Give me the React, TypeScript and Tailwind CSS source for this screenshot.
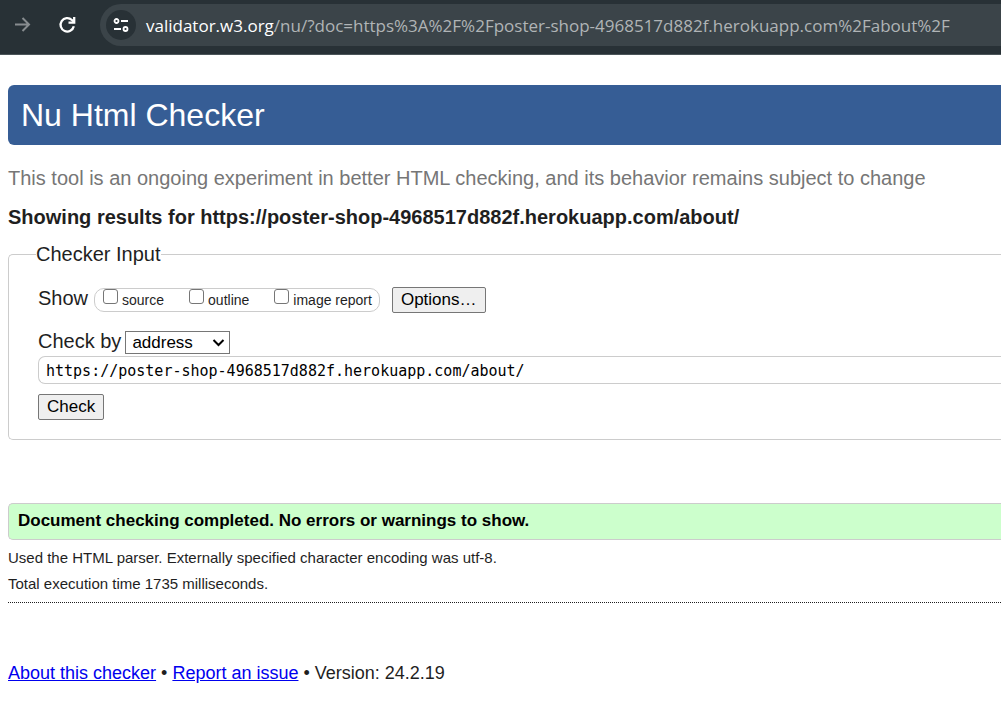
import React from "react";

const checks = ["source", "outline", "image report"];

function Toolbar() {
  return (
    <header className="flex h-[55px] items-center border-b border-[#4b5559] bg-[#283136] pb-1 pl-[13px]">
      <button type="button" aria-label="Forward" className="text-[#878c8f]">
        <svg width="20" height="20" viewBox="0 0 20 20" fill="none" stroke="currentColor" strokeWidth="2">
          <path d="M2 9.500h14M9.500 3l6.500 6.500L9.500 16" />
        </svg>
      </button>
      <button type="button" aria-label="Reload" className="ml-6 text-white">
        <svg width="20" height="20" viewBox="0 0 20 20" fill="none" stroke="currentColor" strokeWidth="2.300">
          <path d="M16.800 11.300a6.700 6.700 0 1 1-1.900-6.300l2 2" />
          <path d="M17.200 2v5.700h-5.700" />
        </svg>
      </button>
      <div className="ml-[23px] flex h-[42px] min-w-0 flex-1 items-center rounded-l-full bg-[#3b4449] pl-[6px]">
        <button
          type="button"
          aria-label="View site information"
          className="flex size-[30px] shrink-0 items-center justify-center rounded-full bg-[#283136] text-white"
        >
          <svg width="18" height="18" viewBox="0 0 18 18" fill="none" stroke="currentColor" strokeWidth="1.800">
            <circle cx="4.500" cy="5" r="2" />
            <path d="M9 5h7M2 13h7" />
            <circle cx="13.500" cy="13" r="2" />
          </svg>
        </button>
        <div className="ml-[10px] whitespace-nowrap pt-[2px] font-['Open_Sans','Noto_Sans',sans-serif] text-[17px] leading-6 text-[#b0b4b6]">
          <span className="text-white">validator.w3.org</span>
          /nu/?doc=https%3A%2F%2Fposter-shop-4968517d882f.herokuapp.com%2Fabout%2F
        </div>
      </div>
    </header>
  );
}

export default function App() {
  return (
    <div className="min-h-screen overflow-x-hidden bg-white font-['Liberation_Sans',Arial,sans-serif] text-[#1f1f1f]">
      <Toolbar />
      <main className="pl-2 pt-[30px]">
        <h1 className="rounded-l-md bg-[#365d95] py-[10px] pl-[13px] text-[32px] leading-10 text-white">
          Nu Html Checker
        </h1>
        <p className="mt-[19px] text-[20px] leading-7 text-[#767676]">
          This tool is an ongoing experiment in better HTML checking, and its behavior remains subject to change
        </p>
        <h2 className="mt-[11px] text-[20px] font-bold leading-7">
          Showing results for https://poster-shop-4968517d882f.herokuapp.com/about/
        </h2>

        <form onSubmit={(e) => e.preventDefault()}>
          <fieldset className="mt-2 rounded-l-[5px] border border-r-0 border-[#ccc] pb-[19px] pl-[29px]">
            <legend className="-ml-[2px] text-[20px] leading-[30px]">Checker Input</legend>
            <div className="mt-[15px] flex items-center">
              <span className="pb-1 text-[20px] leading-7">Show</span>
              <div className="ml-[6px] flex h-6 items-center gap-[25px] rounded-[10px] border border-[#ccc] pl-2 pr-[7px] text-[14px]">
                {checks.map((name) => (
                  <label key={name} className="flex items-center gap-1">
                    <input
                      type="checkbox"
                      className="mb-2 size-[15px] appearance-none rounded-[3px] border border-[#767676] bg-white checked:bg-[#0075ff]"
                    />
                    {name}
                  </label>
                ))}
              </div>
              <button
                type="button"
                className="ml-3 h-[26px] rounded-[2px] border border-[#767676] bg-[#efefef] px-2 text-[17px] leading-6 text-black"
              >
                Options…
              </button>
            </div>
            <div className="mt-[13px] flex items-center">
              <label htmlFor="method" className="pb-[2px] text-[20px] leading-6">
                Check by
              </label>
              <div className="relative ml-1">
                <select
                  id="method"
                  defaultValue="address"
                  className="block h-[23px] w-[105px] appearance-none border border-[#767676] bg-white pl-[6px] pt-[1px] text-[17px] leading-5 text-black"
                >
                  <option value="address">address</option>
                  <option value="file">file upload</option>
                  <option value="text">text input</option>
                </select>
                <svg
                  className="pointer-events-none absolute right-[5px] top-[5px]"
                  width="13"
                  height="13"
                  viewBox="0 0 13 13"
                  fill="none"
                  stroke="#000"
                  strokeWidth="2"
                >
                  <path d="M1.500 4l5 5 5-5" />
                </svg>
              </div>
            </div>
            <input
              type="text"
              aria-label="Document address"
              defaultValue="https://poster-shop-4968517d882f.herokuapp.com/about/"
              className="mt-[1px] block h-7 w-full rounded-l-[7px] border border-r-0 border-[#ccc] bg-white pl-[7px] pt-[2px] font-['DejaVu_Sans_Mono',monospace] text-[15px] text-black"
            />
            <button
              type="submit"
              className="mt-[10px] block h-[26px] rounded-[2px] border border-[#767676] bg-[#efefef] px-2 text-[17px] leading-6 text-black"
            >
              Check
            </button>
          </fieldset>
        </form>

        <section className="mt-[63px]">
          <p className="rounded-l-[5px] border border-r-0 border-[#ccc] bg-[#ccffcc] pb-[5px] pl-[9px] pt-1 text-[17px] font-bold leading-[26px] text-black">
            Document checking completed. No errors or warnings to show.
          </p>
          <div className="border-b border-dotted border-[#1f1f1f] pb-[5px] pt-[5px] text-[15px] leading-[26px]">
            <p>Used the HTML parser. Externally specified character encoding was utf-8.</p>
            <p>Total execution time 1735 milliseconds.</p>
          </div>
        </section>

        <footer className="mt-[57px] text-[18px] leading-[26px]">
          <a href="#about" className="text-[#0000ee] underline">About this checker</a>
          {" • "}
          <a href="#issues" className="text-[#0000ee] underline">Report an issue</a>
          {" • Version: 24.2.19"}
        </footer>
      </main>
    </div>
  );
}
